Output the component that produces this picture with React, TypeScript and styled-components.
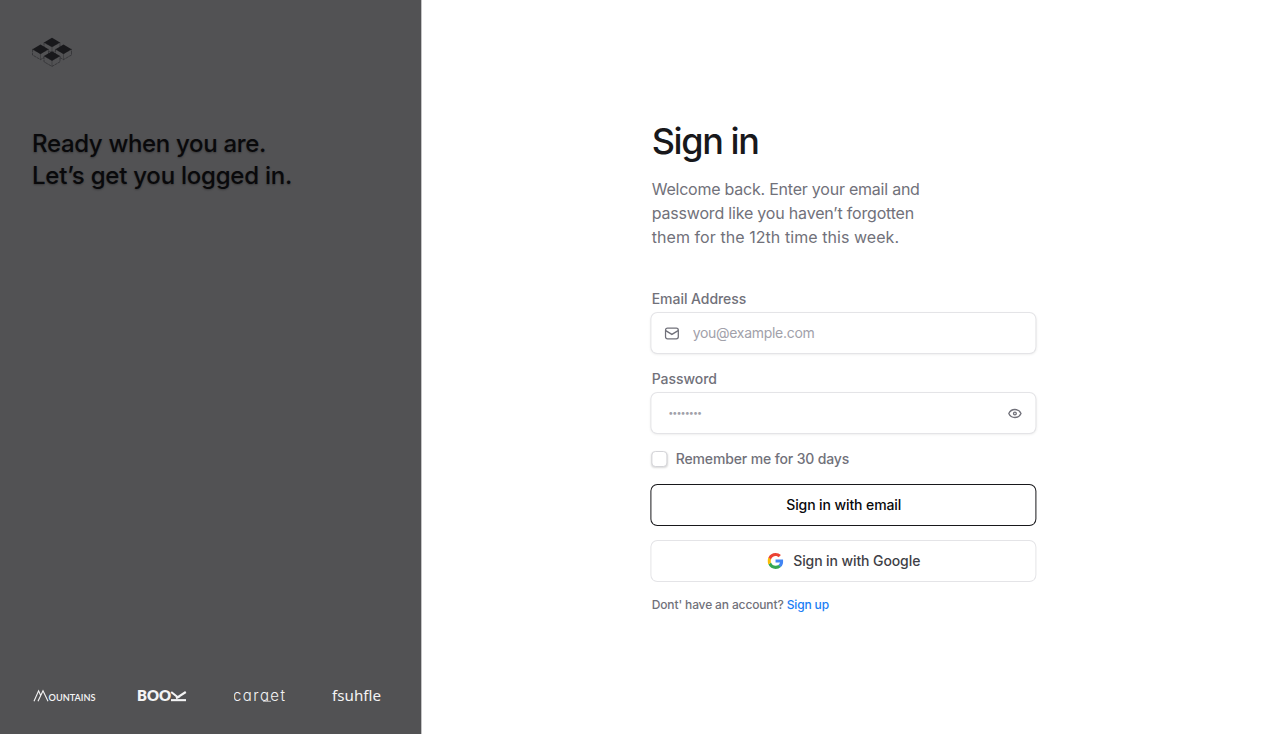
import React from "react";
import styled, { createGlobalStyle } from "styled-components";

const GlobalStyle = createGlobalStyle`
  *, *::before, *::after { box-sizing: border-box; }
  html { background: #fff; }
  body {
    margin: 0;
    font-family: Inter, "Liberation Sans", sans-serif;
    -webkit-font-smoothing: antialiased;
    color: #71717a;
  }
  h1, h2, p { margin: 0; }
  button, input { font: inherit; }
`;

const Page = styled.main`
  display: grid;
  grid-template-columns: 1fr 2fr;
  height: 734px;
`;

const Aside = styled.aside`
  display: flex;
  flex-direction: column;
  padding: 32px;
  background: #525254;
  border-right: 1px solid #c4c4c5;
`;

const BrandMark = styled.svg`
  display: block;
  width: 40px;
  height: 40px;
`;

const Tagline = styled.h2`
  margin-top: 56px;
  font-size: 24px;
  line-height: 32px;
  font-weight: 500;
  white-space: nowrap;
  color: #09090b;
  text-shadow: 0 1px 2px rgba(0, 0, 0, 0.3);
`;

const Line = styled.span<{ $spacing: number }>`
  display: block;
  letter-spacing: ${(p) => p.$spacing}px;
`;

const Partners = styled.div`
  display: flex;
  margin-top: auto;
  margin-bottom: -6px;
  height: 24px;
`;

const PartnerLogo = styled.svg`
  display: block;
  flex: none;
  height: 24px;
  fill: #f4f4f5;
`;

const Content = styled.section`
  display: flex;
  flex-direction: column;
  align-items: center;
  padding-top: 121px;
`;

const Form = styled.form`
  display: flex;
  flex-direction: column;
  width: 384px;
  transform: translateX(0.4px);
`;

const Title = styled.h1`
  font-size: 36px;
  line-height: 40px;
  font-weight: 500;
  letter-spacing: -1.4px;
  color: #18181b;
`;

const Intro = styled.p`
  margin: 16px 0 40px;
  font-size: 16px;
  line-height: 24px;
`;

const Label = styled.label`
  margin-bottom: 4px;
  font-size: 14px;
  line-height: 20px;
  font-weight: 500;
  letter-spacing: -0.05px;
`;

const Field = styled.div`
  display: flex;
  align-items: center;
  height: 40px;
  margin-bottom: 16px;
  padding: 0 13px;
  border-radius: 6px;
  background: #fff;
  box-shadow: 0 0 0 1px #e4e4e7, 0 1px 3px rgba(0, 0, 0, 0.12);
`;

const Input = styled.input<{ $indent: number; $spacing: number; $size: number }>`
  flex: 1;
  min-width: 0;
  height: 38px;
  margin-bottom: 2px;
  padding: 0 0 0 ${(p) => p.$indent}px;
  border: 0;
  outline: 0;
  background: transparent;
  font-size: ${(p) => p.$size}px;
  letter-spacing: ${(p) => p.$spacing}px;
  &::placeholder { color: #a1a1aa; opacity: 1; }
`;

const FieldIcon = styled.svg`
  width: 15px;
  height: 15px;
  flex: none;
  fill: none;
  stroke: #71717a;
`;

const Remember = styled.label`
  display: flex;
  align-items: center;
  gap: 8px;
  height: 20px;
  font-size: 14px;
  line-height: 20px;
  font-weight: 500;
  letter-spacing: -0.14px;
`;

const Checkbox = styled.input`
  appearance: none;
  width: 16px;
  height: 16px;
  margin: 0;
  border: 1px solid #d4d4d8;
  border-radius: 4px;
  background: #fff;
  box-shadow: 0 1px 2px rgba(0, 0, 0, 0.15);
`;

const Button = styled.button<{ $primary?: boolean }>`
  display: flex;
  align-items: center;
  justify-content: center;
  gap: 10px;
  height: 40px;
  margin-top: 16px;
  padding: 0;
  border: 0;
  border-radius: 6px;
  background: #fff;
  font-size: 14px;
  line-height: 20px;
  font-weight: 500;
  letter-spacing: -0.1px;
  color: ${(p) => (p.$primary ? "#09090b" : "#3f3f46")};
  box-shadow: 0 0 0 1px ${(p) => (p.$primary ? "#18181b" : "#e4e4e7")};
`;

const Footnote = styled.p`
  margin-top: 16px;
  font-size: 12px;
  line-height: 16px;
  font-weight: 500;
  letter-spacing: -0.14px;
`;

const SignUp = styled.a`
  color: #1a7ef5;
  text-decoration: none;
`;

const cubes = [
  [20, 10.4],
  [8.5, 17.2],
  [31.5, 17.2],
  [20, 24],
];

function Cubes() {
  return (
    <BrandMark viewBox="0 0 40 40">
      {cubes.map(([x, y]) => (
        <g key={`${x}-${y}`}>
          <path
            d={`M${x - 8} ${y}V${y + 5.8}L${x} ${y + 10.4}L${x + 8} ${y + 5.8}V${y}L${x} ${y + 4.5}Z`}
            fill="#525254"
            stroke="#27272a"
            strokeWidth=".6"
            strokeDasharray="3 .6"
          />
          <path d={`M${x} ${y + 4}V${y + 10.5}`} stroke="#303033" strokeWidth=".5" />
          <path d={`M${x - 8} ${y}L${x} ${y - 4.7}L${x + 8} ${y}L${x} ${y + 4.7}Z`} fill="#18181b" />
        </g>
      ))}
    </BrandMark>
  );
}

function GoogleMark() {
  return (
    <svg width="16" height="16" viewBox="0 0 256 262">
      <path fill="#4285F4" d="M255.878 133.451c0-10.734-.871-18.567-2.756-26.69H130.55v48.448h71.947c-1.45 12.04-9.283 30.172-26.69 42.356l-.244 1.622 38.755 30.023 2.685.268c24.659-22.774 38.875-56.282 38.875-96.027" />
      <path fill="#34A853" d="M130.55 261.1c35.248 0 64.839-11.605 86.453-31.622l-41.196-31.913c-11.024 7.688-25.82 13.055-45.257 13.055-34.523 0-63.824-22.773-74.269-54.25l-1.531.13-40.298 31.187-.527 1.465C35.393 231.798 79.49 261.1 130.55 261.1" />
      <path fill="#FBBC05" d="M56.281 156.37c-2.756-8.123-4.351-16.827-4.351-25.82 0-8.994 1.595-17.697 4.206-25.82l-.073-1.73L15.26 71.312l-1.335.635C5.077 89.644 0 109.517 0 130.55s5.077 40.905 13.925 58.602l42.356-32.782" />
      <path fill="#EB4335" d="M130.55 50.479c24.514 0 41.05 10.589 50.479 19.438l36.844-35.974C195.245 12.91 165.798 0 130.55 0 79.49 0 35.393 29.301 13.925 71.947l42.211 32.783c10.59-31.477 39.891-54.251 74.414-54.251" />
    </svg>
  );
}

export default function App() {
  return (
    <>
      <GlobalStyle />
      <Page>
        <Aside>
          <Cubes />
          <Tagline>
            <Line $spacing={-0.33}>Ready when you are.</Line>
            <Line $spacing={-0.24}>Let’s get you logged in.</Line>
          </Tagline>
          <Partners>
            <PartnerLogo width="104" viewBox="0 0 104 24">
              <path d="M2 17.2L6.6 6.8L8.7 11.5M6 17.2L11 6.8L16 17.2" fill="none" stroke="#f4f4f5" strokeWidth="1.1" />
              <text x="16.5" y="17.4" fontFamily="Lato" fontWeight="600" fontSize="9" textLength="47" lengthAdjust="spacingAndGlyphs">OUNTAINS</text>
            </PartnerLogo>
            <PartnerLogo width="98" viewBox="0 0 98 24">
              <text x="1" y="17" fontFamily="Lato" fontWeight="800" fontSize="14.6" textLength="34" lengthAdjust="spacingAndGlyphs">BOO</text>
              <path d="M35 15.1H50V17.2H35Z" />
              <path d="M35.2 8L41.8 13.2L49.8 8M40 14.2L43.8 12.2" fill="none" stroke="#f4f4f5" strokeWidth="2.1" />
            </PartnerLogo>
            <PartnerLogo width="97" viewBox="0 0 97 24">
              <text x="-1" y="17" fontFamily="Inter" fontWeight="300" fontSize="15" textLength="52" style={{ fontFeatureSettings: '"cv11"' }}>caraet</text>
              <path d="M29 17.3H37" stroke="#f4f4f5" strokeWidth=".7" />
            </PartnerLogo>
            <PartnerLogo width="56" viewBox="0 0 56 24">
              <text x="1" y="17.4" fontFamily="Noto Sans" fontWeight="400" fontSize="15.2" textLength="49">fsuhfle</text>
            </PartnerLogo>
          </Partners>
        </Aside>
        <Content>
          <Form onSubmit={(e) => e.preventDefault()}>
            <Title>Sign in</Title>
            <Intro>
              <Line $spacing={-0.23}>Welcome back. Enter your email and</Line>
              <Line $spacing={-0.19}>password like you haven’t forgotten</Line>
              <Line $spacing={0.06}>them for the 12th time this week.</Line>
            </Intro>
            <Label htmlFor="email">Email Address</Label>
            <Field>
              <FieldIcon viewBox="0 0 15 15" strokeWidth="1.3">
                <rect x="1.1" y="2.2" width="12.8" height="10.6" rx="2" />
                <path d="M1.3 4.6L7.5 8.4L13.7 4.6" />
              </FieldIcon>
              <Input id="email" type="email" placeholder="you@example.com" $indent={13} $spacing={-0.3} $size={14} />
            </Field>
            <Label htmlFor="password">Password</Label>
            <Field>
              <Input id="password" type="password" placeholder="••••••••" $indent={3.5} $spacing={-0.95} $size={9} />
              <FieldIcon viewBox="0 0 15 15" strokeWidth="1.3">
                <path d="M1.4 7.5C2.6 4.8 4.8 3.5 7.5 3.5S12.4 4.8 13.6 7.5C12.4 10.2 10.2 11.5 7.5 11.5S2.6 10.2 1.4 7.5Z" />
                <circle cx="7.5" cy="7.5" r="1.4" />
              </FieldIcon>
            </Field>
            <Remember>
              <Checkbox type="checkbox" />
              Remember me for 30 days
            </Remember>
            <Button type="submit" $primary>Sign in with email</Button>
            <Button type="button">
              <GoogleMark />
              Sign in with Google
            </Button>
            <Footnote>
              Dont' have an account? <SignUp href="#">Sign up</SignUp>
            </Footnote>
          </Form>
        </Content>
      </Page>
    </>
  );
}
